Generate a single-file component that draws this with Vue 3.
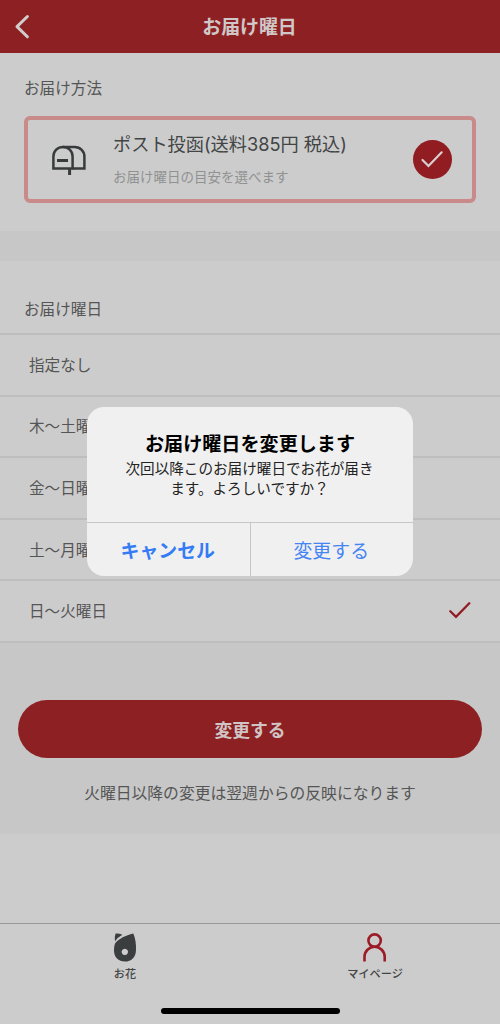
<script setup>
const days = [
  { label: '指定なし', selected: false },
  { label: '木〜土曜日', selected: false },
  { label: '金〜日曜日', selected: false },
  { label: '土〜月曜日', selected: false },
  { label: '日〜火曜日', selected: true },
]
</script>

<template>
  <div class="screen">
    <header class="header">
      <svg class="back" width="16" height="26" viewBox="0 0 16 26">
        <path d="M13.4 2.5 L3 12.6 L13.4 22.8" />
      </svg>
      <h1>お届け曜日</h1>
    </header>

    <section class="method">
      <h2 class="label">お届け方法</h2>
      <div class="card">
        <svg class="post" width="36" height="32" viewBox="0 0 36 32">
          <path d="M2.4 24.6 V12.5 A9.6 9.6 0 0 1 21.6 12.5 V24.6 Z" />
          <path d="M11.5 2.9 H23.8 A9.6 9.6 0 0 1 33.4 12.8 V24.6 H21.6" />
          <path d="M6 16.6 H17 M18.6 24.4 V31" class="thick" />
        </svg>
        <div class="card-text">
          <div class="card-title">ポスト投函(送料385円 税込)</div>
          <div class="card-sub">お届け曜日の目安を選べます</div>
        </div>
        <span class="badge">
          <svg width="39" height="39" viewBox="0 0 39 39"><path d="M9.5 20 L15.5 26 L28.7 12.3" /></svg>
        </span>
      </div>
    </section>

    <div class="band"></div>

    <section class="days">
      <h2 class="label">お届け曜日</h2>
      <ul>
        <li v-for="day in days" :key="day.label">
          <span>{{ day.label }}</span>
          <svg v-if="day.selected" width="22" height="18" viewBox="0 0 22 18">
            <path d="M1.3 10.2 L7 15.9 L20.3 2.3" />
          </svg>
        </li>
      </ul>
    </section>

    <section class="submit">
      <button class="primary">変更する</button>
      <p>火曜日以降の変更は翌週からの反映になります</p>
    </section>

    <nav class="tabs">
      <div class="tab">
        <svg width="24" height="30" viewBox="0 0 24 30">
          <path class="petal" d="M2.6 .6 Q6 .3 9.4 1.8 Q5 4.2 2 8.2 Q1.2 4.2 2.6 .6 Z" />
          <path class="petal" fill-rule="evenodd" d="M20.3 .4 C22.4 5 23.2 11 23 17 C22.8 24.5 18.2 28.6 12 28.6 C5.4 28.6 1 24.2 1 17.6 C1 15 1.2 12.3 2.2 10.2 C6 5.5 12.5 2.3 20.3 .4 Z M11.8 15.7 a3.2 3.2 0 1 0 .01 0 Z" />
        </svg>
        <span>お花</span>
      </div>
      <div class="tab">
        <svg width="24" height="30" viewBox="0 0 24 30">
          <circle class="person" cx="11.6" cy="7.6" r="6.2" />
          <path class="person" d="M1.5 28.6 V24 A10.1 10.2 0 0 1 21.7 24 V28.6" />
        </svg>
        <span>マイページ</span>
      </div>
    </nav>
    <div class="home-bar"></div>

    <div class="dialog">
      <div class="message">
        <h3>お届け曜日を変更します</h3>
        <p>次回以降このお届け曜日でお花が届き<br>ます。よろしいですか？</p>
      </div>
      <div class="actions">
        <button class="cancel">キャンセル</button>
        <button>変更する</button>
      </div>
    </div>
  </div>
</template>

<style>
body {
  background: #ccc;
}
</style>

<style scoped>
* {
  box-sizing: border-box;
  margin: 0;
  padding: 0;
}
.screen {
  position: relative;
  display: flex;
  flex-direction: column;
  width: 500px;
  height: 1024px;
  overflow: hidden;
  background: #ccc;
  color: #555;
  font-family: "Noto Sans CJK JP", sans-serif;
}
svg {
  display: block;
  fill: none;
}
button {
  border: 0;
  background: none;
  font-family: inherit;
}
.header {
  position: relative;
  flex: none;
  display: flex;
  align-items: center;
  justify-content: center;
  height: 53px;
  padding: 0 1px 1px 0;
  background: #8d2023;
}
.header h1 {
  color: #d0c8c8;
  font-size: 18.9px;
  font-weight: 700;
  line-height: 28px;
}
.back {
  position: absolute;
  left: 14px;
  top: 14px;
  stroke: #d2cccc;
  stroke-width: 3;
  stroke-linecap: round;
  stroke-linejoin: round;
}
.label {
  font-size: 15.6px;
  font-weight: 400;
  line-height: 24px;
}
.method {
  flex: none;
  height: 178px;
  padding: 22px 24px 0;
}
.card {
  display: flex;
  align-items: center;
  height: 87px;
  margin-top: 17px;
  padding: 0 20px 0 23px;
  border: 4px solid #c98a8a;
  border-radius: 6px;
}
.post {
  flex: none;
  stroke: #383b3b;
  stroke-width: 2.5;
}
.post .thick {
  stroke-width: 3;
}
.card-text {
  flex: 1;
  margin: -2px 0 0 26px;
  white-space: nowrap;
}
.card-title {
  color: #424545;
  font-family: Inter, "Noto Sans CJK JP", sans-serif;
  font-size: 18.2px;
  line-height: 28px;
}
.card-sub {
  margin-top: 6px;
  color: #909292;
  font-size: 13.5px;
  line-height: 24px;
}
.badge {
  width: 39px;
  height: 39px;
  border-radius: 50%;
  background: #911c22;
}
.badge svg {
  stroke: #d8d0d0;
  stroke-width: 2.2;
  stroke-linecap: round;
}
.band {
  flex: none;
  height: 30px;
  background: #c7c7c7;
}
.days {
  flex: none;
  height: 380px;
}
.days .label {
  height: 72px;
  padding: 35px 24px 0;
}
ul {
  list-style: none;
}
li {
  display: flex;
  align-items: center;
  justify-content: space-between;
  height: 61.6px;
  padding: 0 29px 2px;
  border-top: 2px solid #bebebe;
  font-size: 15.6px;
}
li svg {
  stroke: #911c24;
  stroke-width: 2.3;
  stroke-linecap: round;
}
.submit {
  flex: none;
  height: 193px;
  padding: 57px 18px 0;
  border-top: 2px solid #bebebe;
  background: #c7c7c7;
  text-align: center;
}
.primary {
  display: block;
  width: 464px;
  height: 58px;
  border-radius: 29px;
  background: #8d2023;
  color: #d0c4c4;
  font-size: 17.8px;
  font-weight: 700;
}
.submit p {
  margin-top: 23px;
  font-size: 15.8px;
  line-height: 24px;
  white-space: nowrap;
}
.tabs {
  display: flex;
  flex: none;
  height: 77px;
  margin-top: 89px;
  border-top: 1px solid #999;
}
.tab {
  flex: 1;
  display: flex;
  flex-direction: column;
  align-items: center;
  padding-top: 9px;
  color: #444;
  font-size: 11.2px;
  font-weight: 500;
  line-height: 16px;
}
.tab span {
  margin-top: 2px;
}
.petal {
  fill: #3b3e3e;
}
.person {
  stroke: #9b1c26;
  stroke-width: 2.6;
}
.home-bar {
  flex: none;
  width: 179px;
  height: 6px;
  margin: 8px 0 0 161px;
  border-radius: 3px;
  background: #000;
}
.dialog {
  position: absolute;
  left: 87px;
  top: 407px;
  display: flex;
  flex-direction: column;
  width: 326px;
  height: 169px;
  overflow: hidden;
  border-radius: 17px;
  background: #f0f0f0;
  color: #000;
  text-align: center;
}
.message {
  flex: 1;
  padding-top: 22px;
}
.message h3 {
  font-size: 19.1px;
  font-weight: 700;
  line-height: 28px;
}
.message p {
  margin: 1px 1px 0 0;
  color: #222;
  font-size: 14.6px;
  line-height: 19.5px;
}
.actions {
  display: flex;
  height: 54px;
  border-top: 1px solid #c6c6c6;
}
.actions button {
  flex: 1;
  padding-right: 1px;
  color: #4585f3;
  font-size: 18.9px;
}
.actions .cancel {
  border-right: 1px solid #c6c6c6;
  color: #347cf5;
  font-weight: 700;
}
</style>
